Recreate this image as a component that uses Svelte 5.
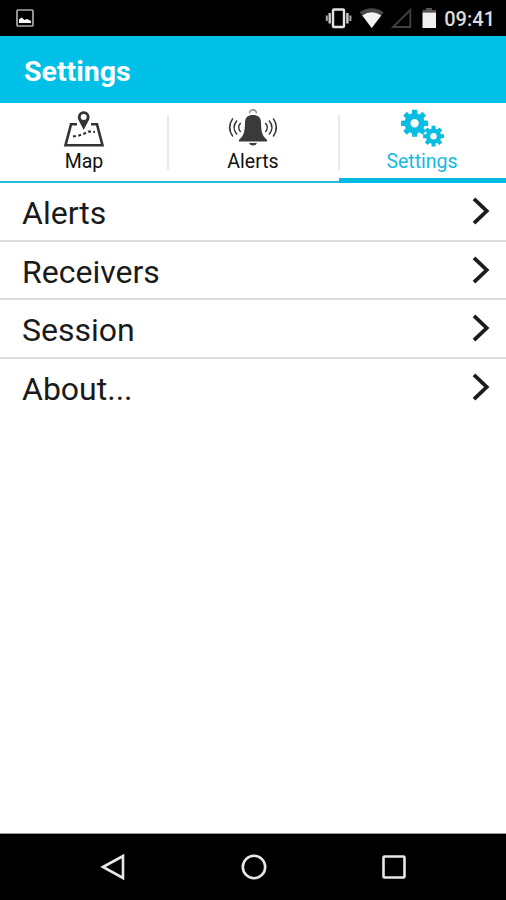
<script lang="ts">
    const tabs = [
        { id: "map", label: "Map" },
        { id: "alerts", label: "Alerts" },
        { id: "settings", label: "Settings" }
    ];

    const rows = ["Alerts", "Receivers", "Session", "About..."];

    let active = $state("settings");

    // eight-toothed cog outline with a round hole (needs evenodd fill)
    function gear(cx: number, cy: number, outer: number, inner: number, hole: number): string {
        const points: string[] = [];
        const step = Math.PI / 4;

        for (let i = 0; i < 8; i++) {
            for (const [offset, r] of [[-0.27, inner], [-0.19, outer], [0.19, outer], [0.27, inner]]) {
                const a = i * step + offset;
                points.push(`${(cx + r * Math.cos(a)).toFixed(2)} ${(cy + r * Math.sin(a)).toFixed(2)}`);
            }
        }

        return `M${points.join("L")}Z M${cx - hole} ${cy}a${hole} ${hole} 0 1 0 ${hole * 2} 0a${hole} ${hole} 0 1 0 ${-hole * 2} 0Z`;
    }
</script>

<div class="screen">
    <div class="status">
        <svg class="picture" width="18" height="18" viewBox="0 0 18 18">
            <rect x="1" y="1" width="16" height="16" rx="1" fill="none" stroke="#aaa" stroke-width="1.7" />
            <path d="M3 14V10.5L5.5 8.5L8.5 11L11 10L15 12V14Z" fill="#fff" />
        </svg>
        <svg width="120" height="24" viewBox="324 6 120 24">
            <rect x="333" y="9.5" width="11" height="17.5" rx="1" fill="none" stroke="#e4e4e4" stroke-width="2.4" />
            <path d="M329.7 13V23.5M347.4 13V23.5" stroke="#ccc" stroke-width="2.4" />
            <path d="M326.8 15.5V21M350.4 15.5V21" stroke="#aaa" stroke-width="2" />
            <path d="M359.7 12.2Q371.7 4.5 383.7 12.2L371.7 28Z" fill="#484848" />
            <path d="M362.3 15.5Q371.7 9 381.2 15.5L371.7 28Z" fill="#f4f4f4" />
            <path d="M393 27H410.3V10Z" fill="none" stroke="#424242" stroke-width="1.8" />
            <path d="M422.5 12.5V10H426V8H432V10H436V12.5Z" fill="#555" />
            <rect x="422.5" y="12.5" width="13.5" height="15.5" fill="#f0f0f0" />
        </svg>
        <span class="clock">09:41</span>
    </div>

    <header>Settings</header>

    <nav>
        {#each tabs as tab}
            <button class="tab" class:active={active === tab.id} onclick={() => (active = tab.id)}>
                <svg width="60" height="40" viewBox="0 0 60 40">
                    {#if tab.id === "map"}
                        <path d="M23 15.3H17L11.5 36.2H48.5L43 15.3H37" fill="none" stroke="currentColor" stroke-width="2.6" />
                        <path d="M29.7 21L24.5 11A5.9 5.9 0 1 1 34.9 11Z M29.7 5A3 3 0 1 0 29.7 11A3 3 0 1 0 29.7 5Z" fill="currentColor" fill-rule="evenodd" />
                        <path d="M19 27.5L25 26.5L30 24.7L34.5 22.5L41 23" fill="none" stroke="currentColor" stroke-width="2.2" stroke-dasharray="3 2.3" />
                    {:else if tab.id === "alerts"}
                        <path d="M26.5 4.2A3.5 3.5 0 0 1 33.5 4.2" fill="none" stroke="#888" stroke-width="1.5" />
                        <path d="M30 6C25 6 22.2 8.5 22 13C21.8 23 21 26.5 15.9 31V32.5H44.1V31C39 26.5 38.2 23 38 13C37.8 8.5 35 6 30 6Z" />
                        <path d="M26 34H34Q33 36.6 30 36.6Q27 36.6 26 34Z" />
                        <g fill="none" stroke="currentColor" stroke-width="1.5">
                            <path d="M17.7 14Q13.7 18.5 17.7 23M14 11.5Q8 18.5 14 25.5M9.8 9.3Q3.5 18.5 9.8 27.5" />
                            <path d="M42.3 14Q46.3 18.5 42.3 23M46 11.5Q52 18.5 46 25.5M50.2 9.3Q56.5 18.5 50.2 27.5" />
                        </g>
                    {:else}
                        <path d={gear(22.6, 14.3, 13.8, 10.2, 4.2)} fill-rule="evenodd" />
                        <path d={gear(41.5, 27.2, 10.6, 7.7, 3.2)} fill-rule="evenodd" />
                    {/if}
                </svg>
                <span>{tab.label}</span>
            </button>
        {/each}
    </nav>

    <main>
        {#each rows as row}
            <div class="row">
                <span>{row}</span>
                <svg width="20" height="30" viewBox="0 0 20 30">
                    <path d="M3 2.8L15.7 15L3 27.2" fill="none" stroke="#1c1c1c" stroke-width="3.8" />
                </svg>
            </div>
        {/each}
    </main>

    <footer>
        <svg width="28" height="28" viewBox="0 0 28 28">
            <path d="M4 14L24 3V25Z" />
        </svg>
        <svg width="28" height="28" viewBox="0 0 28 28">
            <circle cx="14" cy="14" r="11.2" />
        </svg>
        <svg width="28" height="28" viewBox="0 0 28 28">
            <rect x="3.5" y="3.5" width="21" height="21" rx="1" />
        </svg>
    </footer>
</div>

<style>
    :global(body) {
        background: #fff;
    }

    .screen {
        display: flex;
        flex-direction: column;
        width: 506px;
        height: 900px;
        overflow: hidden;
        font-family: Roboto, "Liberation Sans", sans-serif;
        color: #1a1a1a;
    }

    .status {
        display: flex;
        align-items: center;
        flex: none;
        height: 36px;
        padding: 0 11px 0 16px;
        box-sizing: border-box;
        background: #000;
    }

    .picture {
        margin-right: auto;
    }

    .clock {
        width: 51px;
        padding-top: 2px;
        text-align: right;
        font-size: 20px;
        font-weight: 500;
        line-height: 24px;
        color: #ddd;
    }

    header {
        flex: none;
        height: 66.5px;
        padding: 3px 24px 0;
        box-sizing: border-box;
        background: #00c0e8;
        color: #fff;
        font-size: 28.5px;
        font-weight: 700;
        line-height: 65px;
    }

    nav {
        display: grid;
        grid-template-columns: 168px 171px 167px;
        flex: none;
        height: 80.5px;
    }

    .tab {
        position: relative;
        display: flex;
        flex-direction: column;
        align-items: center;
        padding: 6.5px 0 0;
        border: 0;
        border-bottom: 2.5px solid #20bddc;
        background: #fff;
        color: #111;
        font-family: inherit;
        font-size: 19.5px;
        line-height: 26px;
    }

    .tab svg {
        flex: none;
        fill: #3a3a3a;
        color: #333;
    }

    .tab + .tab {
        padding-right: 1px;
    }

    .tab + .tab::before {
        content: "";
        position: absolute;
        left: -1px;
        top: 12px;
        width: 2px;
        height: 55px;
        background: #e8e8e8;
    }

    .tab.active {
        border-bottom: 5px solid #00bce2;
        color: #14bbdf;
    }

    .tab.active svg {
        fill: #08bce2;
    }

    .row {
        display: flex;
        align-items: center;
        justify-content: space-between;
        height: 58.5px;
        padding: 0 15px 0 22px;
        box-sizing: border-box;
        border-bottom: 2px solid #dcdcdc;
        font-size: 32px;
    }

    .row:last-child {
        border-bottom-color: transparent;
    }

    .row span {
        padding-top: 3.5px;
    }

    footer {
        display: flex;
        align-items: center;
        justify-content: space-between;
        flex: none;
        height: 67px;
        margin-top: auto;
        padding: 0 98px 0 99px;
        box-sizing: border-box;
        border-top: 1px solid #999;
        background: #000;
    }

    footer svg {
        fill: none;
        stroke: #e8e8e8;
        stroke-width: 2.6;
    }
</style>
